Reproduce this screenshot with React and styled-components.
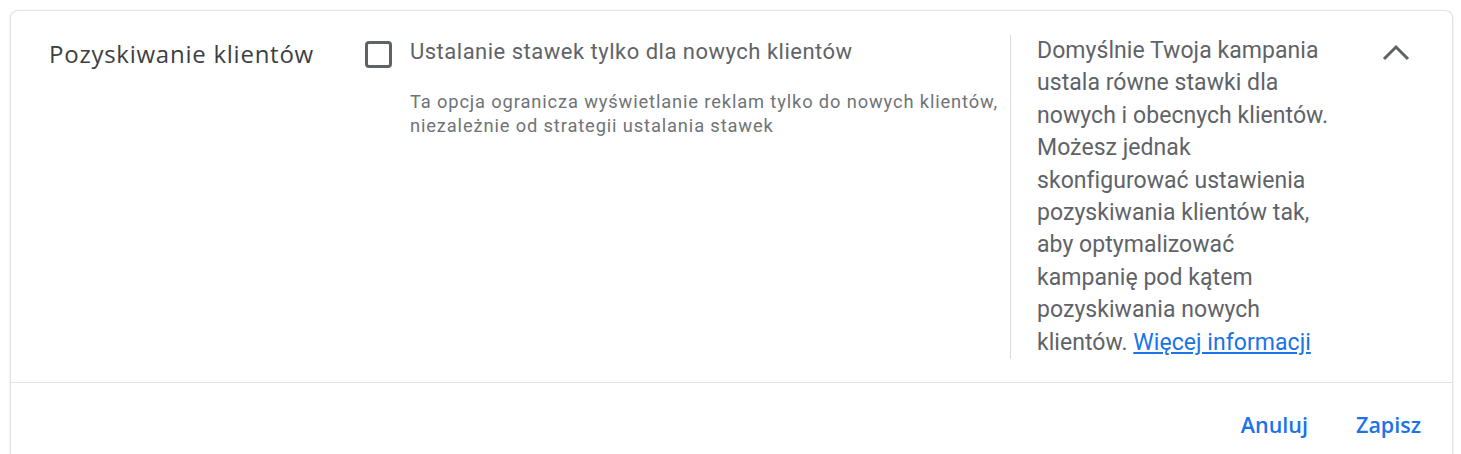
import React from "react";
import styled, { createGlobalStyle } from "styled-components";

const Global = createGlobalStyle`
  html, body { margin: 0; padding: 0; background: #ffffff; }
  body { font-family: Roboto, "Noto Sans", sans-serif; overflow: hidden; }
`;

const Page = styled.div`
  padding: 10px 8px 0 10px;
  height: 454px;
  box-sizing: border-box;
`;

const Card = styled.section`
  box-sizing: border-box;
  height: 460px;
  border: 1px solid #e3e3e3;
  border-bottom: none;
  border-radius: 8px 8px 0 0;
  box-shadow: 0 1px 3px rgba(60, 64, 67, 0.12);
  background: #fff;
  display: flex;
  flex-direction: column;
`;

const Body = styled.div`
  display: flex;
  align-items: flex-start;
  padding: 24px 0 23px 38px;
  border-bottom: 1px solid #e3e3e3;
`;

const Title = styled.h2`
  margin: 0;
  width: 316px;
  flex: none;
  font-family: "Open Sans", Roboto, sans-serif;
  font-weight: 400;
  font-size: 24px;
  letter-spacing: 0.75px;
  line-height: 32px;
  color: #3c4043;
  padding-top: 3px;
  white-space: nowrap;
`;

const Option = styled.div`
  flex: none;
  width: 645px;
  display: flex;
  gap: 18px;
  margin-top: 1px;
`;

const Box = styled.span`
  flex: none;
  box-sizing: border-box;
  width: 27px;
  height: 27px;
  margin-top: 5px;
  border: 3px solid #5f6368;
  border-radius: 4px;
`;

const OptionText = styled.div`
  display: flex;
  flex-direction: column;
`;

const Label = styled.div`
  font-size: 22px;
  letter-spacing: 0.5px;
  line-height: 32px;
  color: #5f6368;
  white-space: nowrap;
`;

const Hint = styled.div`
  margin-top: 22px;
  font-size: 18.3px;
  letter-spacing: 0.87px;
  line-height: 24px;
  color: #6f7377;
  white-space: nowrap;
`;

const Aside = styled.aside`
  flex: none;
  width: 302px;
  border-left: 1px solid #dadce0;
  padding: 0 0 0 26px;
  font-size: 23px;
  letter-spacing: 0.05px;
  line-height: 32.4px;
  color: #5f6368;
`;

const Link = styled.a`
  color: #1a73e8;
  text-decoration: underline;
`;

const Toggle = styled.button`
  flex: none;
  margin: 6px 0 0 42px;
  padding: 0;
  border: none;
  background: none;
  width: 30px;
  height: 24px;
  display: flex;
  align-items: center;
  justify-content: center;
`;

const Footer = styled.div`
  display: flex;
  justify-content: flex-end;
  gap: 32px;
  padding: 26px 23px 0 0;
`;

const TextButton = styled.button`
  border: none;
  background: none;
  padding: 0 8px;
  font-family: "Open Sans", Roboto, sans-serif;
  font-weight: 600;
  font-size: 21.5px;
  line-height: 32px;
  color: #1a73e8;
`;

export default function App() {
  return (
    <>
      <Global />
      <Page>
        <Card>
          <Body>
            <Title>Pozyskiwanie klientów</Title>
            <Option>
              <Box />
              <OptionText>
                <Label>Ustalanie stawek tylko dla nowych klientów</Label>
                <Hint>
                  Ta opcja ogranicza wyświetlanie reklam tylko do nowych klientów,
                  <br />
                  niezależnie od strategii ustalania stawek
                </Hint>
              </OptionText>
            </Option>
            <Aside>
              Domyślnie Twoja kampania ustala równe stawki dla nowych i obecnych
              klientów. Możesz jednak skonfigurować ustawienia pozyskiwania
              klientów tak, aby optymalizować kampanię pod kątem pozyskiwania
              nowych klientów. <Link href="#">Więcej informacji</Link>
            </Aside>
            <Toggle aria-label="Zwiń">
              <svg width="28" height="18" viewBox="0 0 28 18">
                <polyline
                  points="2,15 14,3 26,15"
                  fill="none"
                  stroke="#5f6368"
                  strokeWidth="3"
                />
              </svg>
            </Toggle>
          </Body>
          <Footer>
            <TextButton>Anuluj</TextButton>
            <TextButton>Zapisz</TextButton>
          </Footer>
        </Card>
      </Page>
    </>
  );
}
